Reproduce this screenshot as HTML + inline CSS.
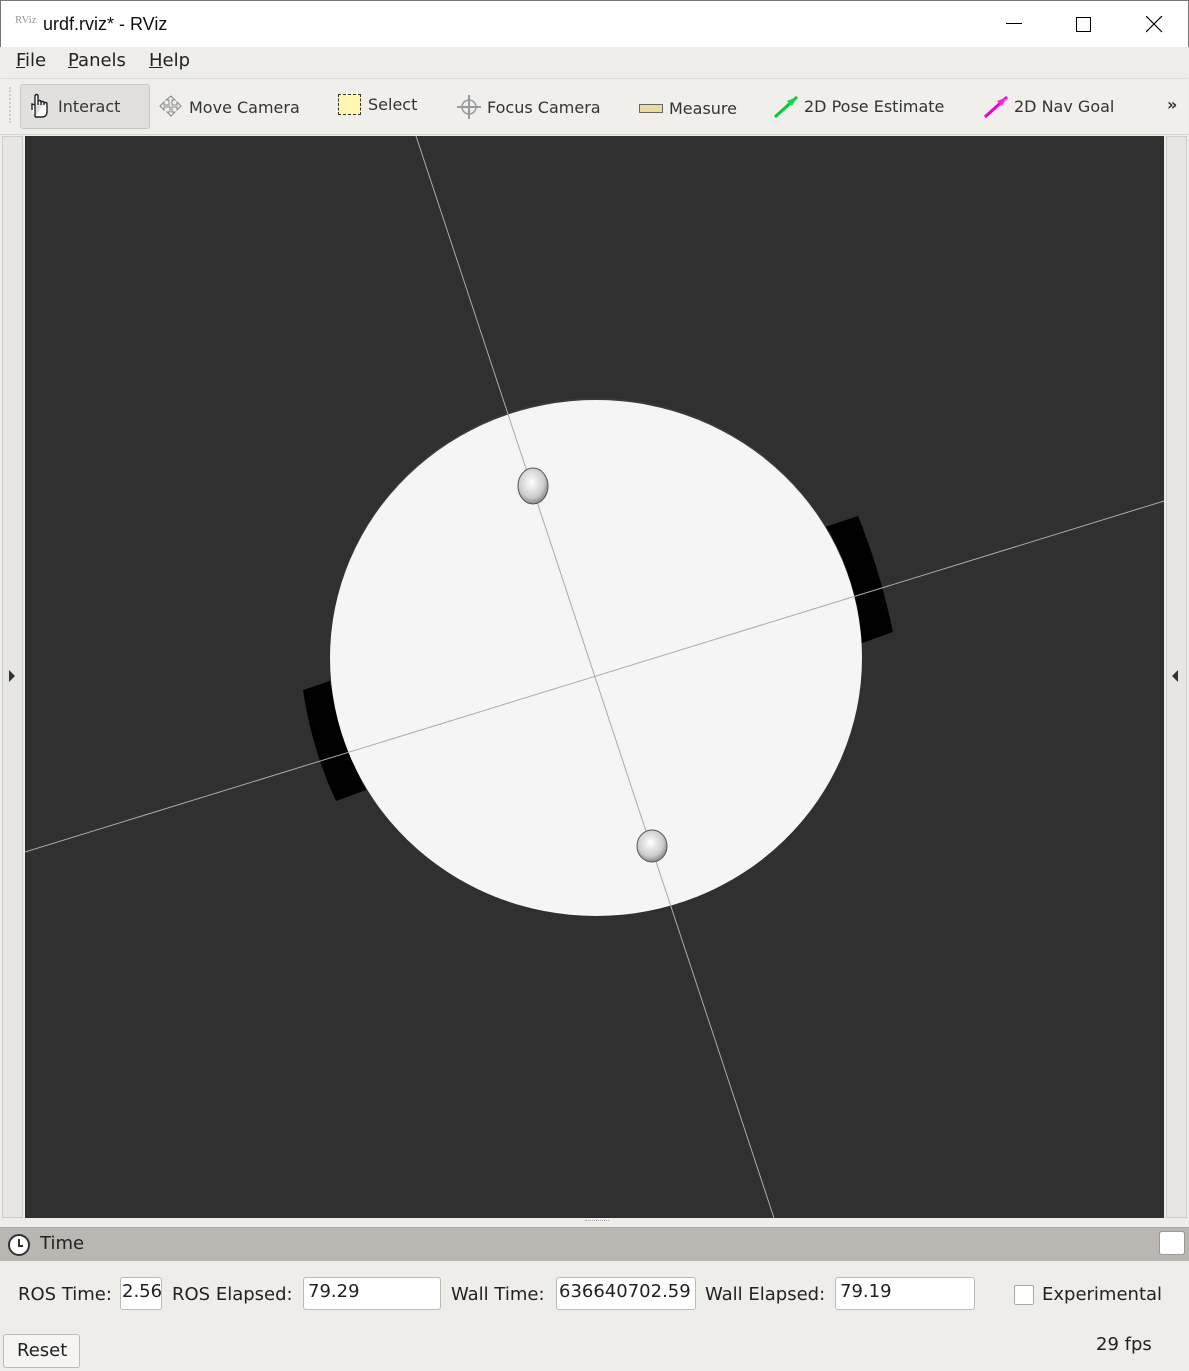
<!DOCTYPE html>
<html><head><meta charset="utf-8"><style>
*{margin:0;padding:0;box-sizing:border-box}
body{width:1189px;height:1371px;background:#efedea;font-family:"DejaVu Sans","Liberation Sans",sans-serif;position:relative;overflow:hidden;color:#222}
.abs{position:absolute}
#title{left:0;top:0;width:1189px;height:47px;background:#fff;border:1px solid #777;border-bottom:none}
#menu{left:1px;top:47px;width:1187px;height:30px;background:#efedea;font-size:18px}
#menu span{position:absolute;top:3px}
#tb{left:1px;top:78px;width:1187px;height:56px;background:#f1efec;border-top:1px solid #ddd;font-size:16px;color:#333}
.tbi{position:absolute;top:28px;display:flex;align-items:center}
input{font-family:inherit}
.fld{position:absolute;top:1277px;height:33px;background:#fff;border:1px solid #bbb;border-radius:3px;font-size:18px;padding:3px 4px;overflow:hidden;white-space:nowrap}
.lbl{position:absolute;top:1284px;font-size:18px}
</style></head><body>
<div id="title" class="abs">
 <div class="abs" style="left:14px;top:13px;font-size:11px;color:#999;font-family:'Liberation Serif',serif">RViz</div>
 <div class="abs" style="left:42px;top:13px;font-size:18px;font-family:'Liberation Sans',sans-serif;color:#111">urdf.rviz* - RViz</div>
 <div class="abs" style="left:1005px;top:22px;width:16px;height:1px;background:#000"></div>
 <div class="abs" style="left:1075px;top:16px;width:15px;height:15px;border:1px solid #000"></div>
 <svg class="abs" style="left:1145px;top:15px" width="17" height="17"><path d="M0 0L16 16M16 0L0 16" stroke="#000" stroke-width="1.2"/></svg>
</div>
<div id="menu" class="abs">
 <span style="left:15px"><u>F</u>ile</span><span style="left:67px"><u>P</u>anels</span><span style="left:148px"><u>H</u>elp</span>
</div>
<div id="tb" class="abs">
 <div class="abs" style="left:8px;top:8px;width:4px;height:36px;border-left:2px dotted #ccc"></div>
 <div class="abs" style="left:19px;top:5px;width:130px;height:45px;background:#e2e0dd;border:1px solid #c8c6c3;border-radius:3px"></div>
 <div class="tbi" style="left:27px;top:14px"><svg width="26" height="26"><path d="M7 24V12l-3-1v6M7 12V3c0-2 3-2 3 0v9M10 9c0-2 3-2 3 0v3M13 10c0-2 3-2 3 0v2M16 11c0-2 3-2 3 0v8c0 3-2 5-5 5H7" fill="#fff" stroke="#222" stroke-width="1.4"/></svg><span style="margin-left:4px">Interact</span></div>
 <div class="tbi" style="left:157px;top:15px"><svg width="26" height="26"><path d="M13 2l4 4h-3v5h5V8l4 4-4 4v-3h-5v5h3l-4 4-4-4h3v-5H6v3l-4-4 4-4v3h5V6H8z" fill="#eee" stroke="#888"/></svg><span style="margin-left:5px">Move Camera</span></div>
 <div class="tbi" style="left:337px;top:15px"><div style="width:23px;height:21px;background:#fdf5b0;border:1px dashed #333"></div><span style="margin-left:7px">Select</span></div>
 <div class="tbi" style="left:455px;top:15px"><svg width="26" height="26"><circle cx="13" cy="13" r="7" fill="#eee" stroke="#999" stroke-width="1.5"/><path d="M13 1v24M1 13h24" stroke="#999" stroke-width="2"/></svg><span style="margin-left:5px">Focus Camera</span></div>
 <div class="tbi" style="left:638px;top:20px"><div style="width:24px;height:9px;background:#e8dca0;border:1px solid #666"></div><span style="margin-left:6px">Measure</span></div>
 <svg class="abs" style="left:772px;top:16px" width="26" height="24"><path d="M2 22L24 2" stroke="#0c3" stroke-width="3"/><path d="M24 2l-10 4 5 5z" fill="#0d4"/></svg>
 <div class="tbi" style="left:803px;top:15px"><span style="line-height:26px">2D Pose Estimate</span></div>
 <svg class="abs" style="left:982px;top:16px" width="26" height="24"><path d="M2 22L24 2" stroke="#e0c" stroke-width="3"/><path d="M24 2l-10 4 5 5z" fill="#f2d"/></svg>
 <div class="tbi" style="left:1013px;top:15px"><span style="line-height:26px">2D Nav Goal</span></div>
 <div class="abs" style="left:1166px;top:16px;font-weight:bold;font-size:16px">»</div>
</div>
<div class="abs" style="left:0;top:134px;width:1189px;height:1px;background:#d8d6d3"></div>
<div class="abs" style="left:2px;top:136px;width:21px;height:1082px;background:#e8e6e3;border:1px solid #ccc"></div>
<div class="abs" style="left:9px;top:670px;border-left:6px solid #333;border-top:6px solid transparent;border-bottom:6px solid transparent"></div>
<div class="abs" style="left:1166px;top:136px;width:21px;height:1082px;background:#e8e6e3;border:1px solid #ccc"></div>
<div class="abs" style="left:1172px;top:670px;border-right:6px solid #333;border-top:6px solid transparent;border-bottom:6px solid transparent"></div>
<svg class="abs" style="left:25px;top:136px" width="1139" height="1082" viewBox="25 136 1139 1082">
 <rect x="25" y="136" width="1139" height="1082" fill="#303030"/>
 <path d="M825 527L858 516Q880 570 893 632L862 643Q852 585 825 527Z" fill="#000"/>
 <path d="M303 690L330 681Q340 740 366 790L336 801Q312 750 303 690Z" fill="#000"/>
 <ellipse cx="596" cy="656" rx="266" ry="258" fill="#3a3a3a"/>
 <ellipse cx="596" cy="658" rx="266" ry="258" fill="#f5f5f5"/>
 <line x1="416" y1="136" x2="774" y2="1218" stroke="#aaa" stroke-width="1"/>
 <line x1="25" y1="852" x2="1164" y2="501" stroke="#aaa" stroke-width="1"/>
 <defs><radialGradient id="g" cx="0.45" cy="0.4" r="0.6"><stop offset="0" stop-color="#fff"/><stop offset="0.7" stop-color="#ccc"/><stop offset="1" stop-color="#888"/></radialGradient></defs>
 <ellipse cx="533" cy="486" rx="15" ry="18" fill="url(#g)" stroke="#555"/>
 <ellipse cx="652" cy="846" rx="15" ry="16" fill="url(#g)" stroke="#555"/>
</svg>
<div class="abs" style="left:585px;top:1220px;width:24px;height:3px;border-top:1px dotted #aaa"></div>
<div class="abs" style="left:0;top:1227px;width:1189px;height:34px;background:#bab6b2;border-top:1px solid #aaa"></div>
<svg class="abs" style="left:7px;top:1233px" width="24" height="24"><circle cx="12" cy="12" r="10" fill="#fff" stroke="#333" stroke-width="2"/><path d="M12 6v7h4" stroke="#333" stroke-width="2" fill="none"/></svg>
<div class="abs" style="left:40px;top:1233px;font-size:18px">Time</div>
<div class="abs" style="left:1159px;top:1231px;width:26px;height:24px;background:#fff;border:1px solid #999;border-radius:3px"></div>
<div class="lbl" style="left:18px">ROS Time:</div>
<div class="fld" style="left:120px;width:42px;padding-left:1px">2.56</div>
<div class="lbl" style="left:172px">ROS Elapsed:</div>
<div class="fld" style="left:303px;width:138px">79.29</div>
<div class="lbl" style="left:451px">Wall Time:</div>
<div class="fld" style="left:556px;width:140px;padding-left:2px">636640702.59</div>
<div class="lbl" style="left:705px">Wall Elapsed:</div>
<div class="fld" style="left:835px;width:140px">79.19</div>
<div class="abs" style="left:1014px;top:1285px;width:20px;height:20px;background:#fff;border:1px solid #aaa;border-radius:2px"></div>
<div class="lbl" style="left:1042px">Experimental</div>
<div class="abs" style="left:3px;top:1334px;width:77px;height:34px;background:#f6f5f3;border:1px solid #bbb;border-radius:3px;font-size:18px;padding:5px 0 0 13px">Reset</div>
<div class="abs" style="left:1096px;top:1334px;font-size:18px">29 fps</div>
</body></html>
